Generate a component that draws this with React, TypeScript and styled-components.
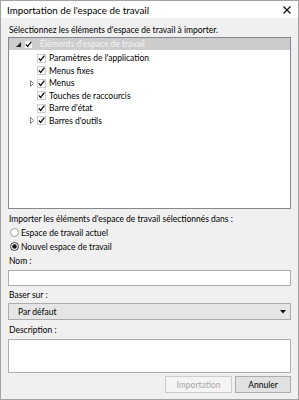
import { FC } from 'react';
import styled, { createGlobalStyle } from 'styled-components';

const GlobalStyle = createGlobalStyle`
  html, body {
    margin: 0;
    padding: 0;
    background: #ffffff;
  }
  body {
    font-family: Lato, 'Open Sans', sans-serif;
    font-size: 8.5px;
    color: #000;
  }
`;

interface INode {
  label: string;
  expandable?: boolean;
}

const children: INode[] = [
  { label: "Paramètres de l'application" },
  { label: 'Menus fixes' },
  { label: 'Menus', expandable: true },
  { label: 'Touches de raccourcis' },
  { label: "Barre d'état" },
  { label: "Barres d'outils", expandable: true },
];

const CheckIcon: FC = () => (
  <svg width="9" height="9" viewBox="0 0 9 9">
    <rect x="0.5" y="0.5" width="8" height="8" fill="#fff" stroke="#cfcfcf" />
    <path d="M1.8 4.4 L3.6 6.4 L7.4 1.6" fill="none" stroke="#111" strokeWidth="1.3" />
  </svg>
);

const Expander: FC<{ open?: boolean }> = ({ open }) =>
  open ? (
    <svg width="5" height="5" viewBox="0 0 5 5">
      <path d="M0 5 L5 5 L5 0 Z" fill="#262626" />
    </svg>
  ) : (
    <svg width="4" height="7" viewBox="0 0 4 7">
      <path d="M0.5 0.5 L3.5 3.5 L0.5 6.5 Z" fill="#fff" stroke="#7a7a7a" />
    </svg>
  );

const RadioIcon: FC<{ checked?: boolean }> = ({ checked }) => (
  <svg width="9" height="9" viewBox="0 0 9 9">
    <circle cx="4.5" cy="4.5" r="4" fill="#fff" stroke={checked ? '#3a3a3a' : '#a0a0a0'} />
    {checked && <circle cx="4.5" cy="4.5" r="2.3" fill="#111" />}
  </svg>
);

export default function App() {
  return (
    <>
      <GlobalStyle />
      <Window>
        <TitleBar>
          <Title>Importation de l'espace de travail</Title>
          <svg width="8" height="8" viewBox="0 0 8 8">
            <path d="M0.5 0.5 L7.5 7.5 M7.5 0.5 L0.5 7.5" stroke="#111" strokeWidth="1.2" />
          </svg>
        </TitleBar>
        <Body>
          <Label $top={4.5}>Sélectionnez les éléments d'espace de travail à importer.</Label>
          <Tree>
            <RootRow>
              <ExpSlot $w={8}>
                <Expander open />
              </ExpSlot>
              <CheckIcon />
              <RootText>Éléments d'espace de travail</RootText>
            </RootRow>
            {children.map((node) => (
              <ChildRow key={node.label}>
                <ExpSlot $w={7}>{node.expandable && <Expander />}</ExpSlot>
                <CheckIcon />
                <RowText>{node.label}</RowText>
              </ChildRow>
            ))}
          </Tree>
          <Label $top={2.5}>Importer les éléments d'espace de travail sélectionnés dans :</Label>
          <RadioRow>
            <RadioIcon />
            Espace de travail actuel
          </RadioRow>
          <RadioRow>
            <RadioIcon checked />
            Nouvel espace de travail
          </RadioRow>
          <Label $top={0.5}>Nom :</Label>
          <TextBox />
          <Label $top={2}>Baser sur :</Label>
          <Select>
            <span>Par défaut</span>
            <svg width="6" height="4" viewBox="0 0 6 4">
              <path d="M0 0 L6 0 L3 3.5 Z" fill="#111" />
            </svg>
          </Select>
          <Label $top={3}>Description :</Label>
          <TextArea />
          <Buttons>
            <Button $disabled>Importation</Button>
            <Button>Annuler</Button>
          </Buttons>
        </Body>
      </Window>
    </>
  );
}

const Window = styled.div`
  width: 299px;
  height: 400px;
  box-sizing: border-box;
  border: 1px solid #a3a3a3;
  background: #f0f0f0;
  display: flex;
  flex-direction: column;
`;

const TitleBar = styled.div`
  height: 17px;
  background: #fff;
  display: flex;
  align-items: center;
  justify-content: space-between;
  padding: 0 7px 0 6px;
`;

const Title = styled.span`
  font-size: 9.8px;
  line-height: 12px;
`;

const Body = styled.div`
  display: flex;
  flex-direction: column;
  padding: 0 7px;
`;

const Label = styled.div<{ $top: number }>`
  margin-top: ${(p) => p.$top}px;
  line-height: 14px;
  height: 14px;
  padding-left: 1px;
  white-space: nowrap;
`;

const Tree = styled.div`
  margin-top: 0.5px;
  height: 172px;
  box-sizing: border-box;
  border: 1px solid #828790;
  background: #fff;
`;

const RootRow = styled.div`
  height: 12px;
  margin-bottom: 2px;
  background: #cccccc;
  display: flex;
  align-items: center;
  padding-left: 7px;
`;

const ChildRow = styled.div`
  height: 12.5px;
  display: flex;
  align-items: center;
  padding-left: 21px;
`;

const ExpSlot = styled.span<{ $w: number }>`
  width: ${(p) => p.$w}px;
  display: flex;
  align-items: center;
`;

const RowText = styled.span`
  margin-left: 3px;
  line-height: 12px;
`;

const RootText = styled(RowText)`
  margin-left: 7px;
  color: #f4f4f4;
`;

const RadioRow = styled.label`
  display: flex;
  align-items: center;
  gap: 2px;
  height: 14px;
  padding-left: 2px;
`;

const TextBox = styled.div`
  margin-top: 2px;
  height: 16px;
  box-sizing: border-box;
  border: 1px solid #abadb3;
  background: #fff;
`;

const Select = styled.div`
  margin-top: 1px;
  height: 17px;
  box-sizing: border-box;
  border: 1px solid #acacac;
  background: #e5e5e5;
  display: flex;
  align-items: center;
  justify-content: space-between;
  padding: 0 4px 0 9px;
`;

const TextArea = styled.div`
  margin-top: 1.5px;
  height: 34.5px;
  box-sizing: border-box;
  border: 1px solid #abadb3;
  background: #fff;
`;

const Buttons = styled.div`
  margin-top: 3px;
  display: flex;
  justify-content: flex-end;
  gap: 3px;
`;

const Button = styled.button<{ $disabled?: boolean }>`
  height: 17px;
  width: ${(p) => (p.$disabled ? 67 : 56)}px;
  box-sizing: border-box;
  font-family: Lato, 'Open Sans', sans-serif;
  font-size: 8.5px;
  padding: 0;
  border: 1px solid ${(p) => (p.$disabled ? '#cccccc' : '#adadad')};
  background: ${(p) => (p.$disabled ? '#f4f4f4' : '#e1e1e1')};
  color: ${(p) => (p.$disabled ? '#a8a8a8' : '#000')};
`;
